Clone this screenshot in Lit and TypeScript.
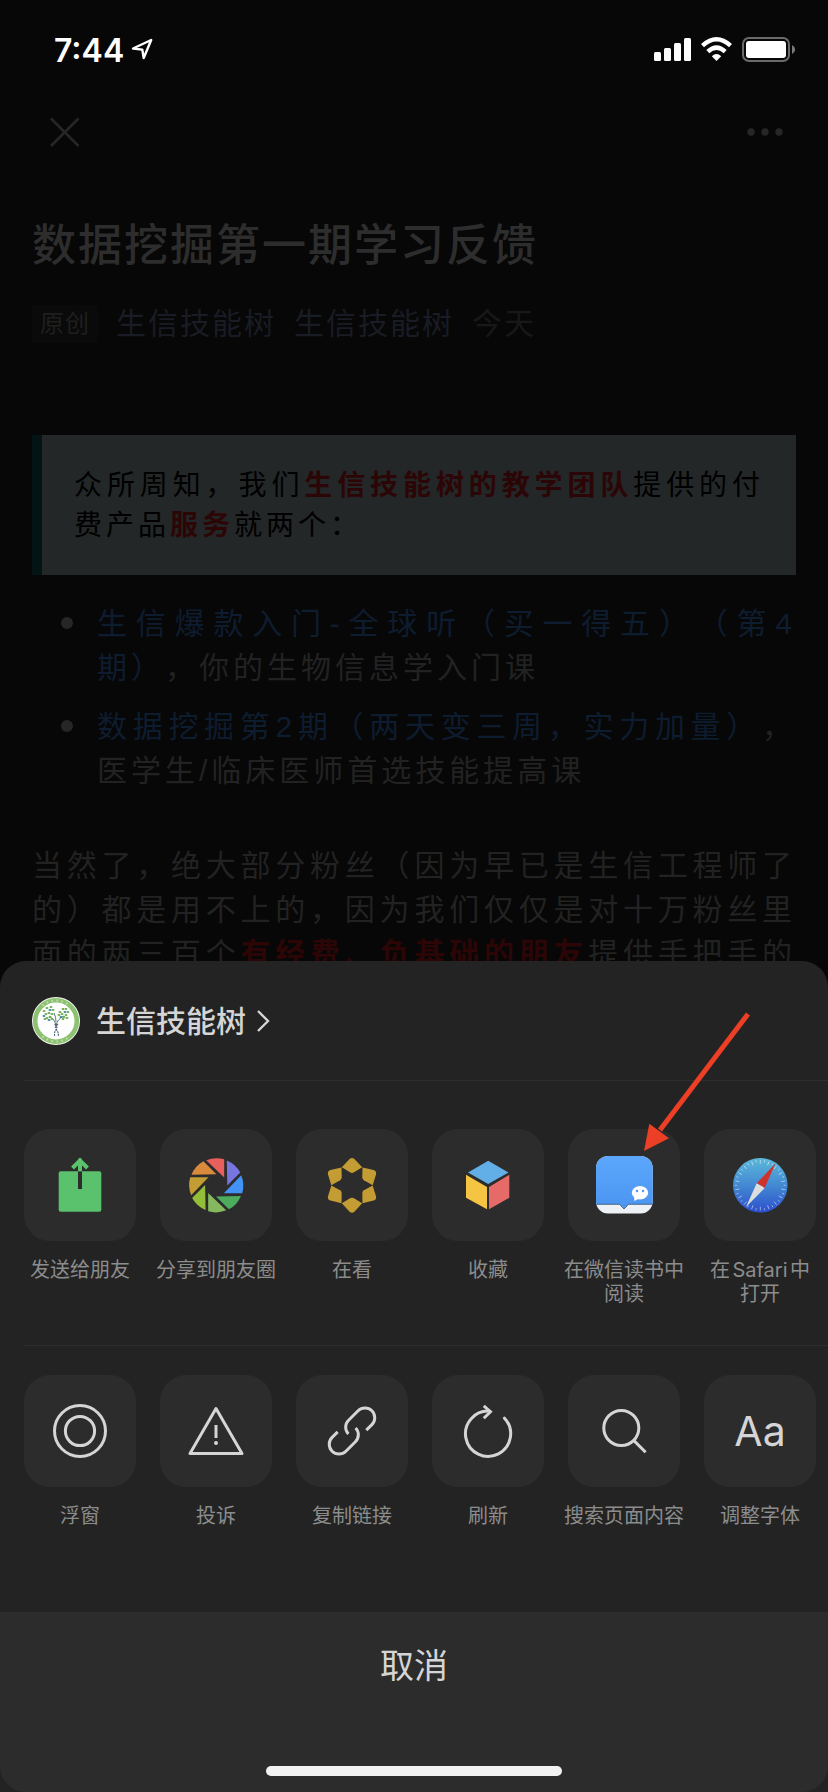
import { LitElement, html, svg, css, TemplateResult } from "lit";
import { customElement, property } from "lit/decorators.js";

interface Action {
  label: string;
  icon: TemplateResult;
}

const tile = (body: unknown) =>
  html`<svg class="glyph" viewBox="0 0 112 112" aria-hidden="true">${body}</svg>`;

const apertureColors = [
  "#e8605c", "#7676de", "#4393f7", "#4dab5e",
  "#86b95f", "#92bf37", "#c49c34", "#d98a3c",
];

const ticks = Array.from({ length: 36 }, (_, i) => i * 10);

const shareActions: Action[] = [
  {
    label: "发送给朋友",
    icon: tile(svg`
      <rect x="34.7" y="42.3" width="42.6" height="40.4" rx="2" fill="#5ac16c"/>
      <rect x="54" y="42.3" width="4" height="17.7" fill="#2c2c2c"/>
      <path d="M48.5 39 56 31.5 63.5 39M56 32V42.3" fill="none" stroke="#5ac16c" stroke-width="4"/>
      <circle cx="56" cy="31" r="2" fill="#5ac16c"/>`),
  },
  {
    label: "分享到朋友圈",
    icon: tile(svg`<g transform="translate(56.2 56.3)">
      ${apertureColors.map((c, i) => svg`<path transform="rotate(${i * 45})" fill=${c} d="M-10 -25A27 27 0 0 1 8 -26V-7.7Z"/>`)}
    </g>`),
  },
  {
    label: "在看",
    icon: tile(svg`<g transform="translate(56 56.3)" fill="#c49c34">
      ${[0, 60, 120, 180, 240, 300].map((a) => svg`<path transform="rotate(${a})" d="M-10.2 -18 -2.4 -26.4Q0 -28.4 2.4 -26.4L10.2 -18 1.6 -12.8Q0 -12 -1.6 -12.8Z"/>`)}
    </g>`),
  },
  {
    label: "收藏",
    icon: tile(svg`
      <path fill="#62aee7" d="M56.2 31.7 76.5 43.4 56.2 55 36 43.4Z"/>
      <path fill="#f6c443" d="M34 45.7 55 58V80.3L34 68.7Z"/>
      <path fill="#e66a67" d="M57 58 77.3 45.7V68.7L57 80.3Z"/>`),
  },
  {
    label: "在微信读书中\n阅读",
    icon: tile(svg`
      <defs>
        <linearGradient id="book" x1="0" y1="0" x2="0" y2="1"><stop offset="0" stop-color="#5ca7fc"/><stop offset="1" stop-color="#4b95f2"/></linearGradient>
        <clipPath id="cover"><rect x="28" y="27" width="56.7" height="57.5" rx="12"/></clipPath>
      </defs>
      <g clip-path="url(#cover)">
        <rect x="28" y="27" width="57" height="58" fill="#eef2f7"/>
        <path d="M28 27H85V75.3H60.5L56 80 51.5 75.3H28Z" fill="url(#book)"/>
        <path d="M28 75.3H51.5L56 80 60.5 75.3H85" fill="none" stroke="#33506f" stroke-width=".8"/>
      </g>
      <ellipse cx="72" cy="63.7" rx="8.2" ry="6.8" fill="#fff"/>
      <path d="M66 67 66.4 72 71 69.5Z" fill="#fff"/>
      <circle cx="69" cy="62" r="1.2" fill="#4b95f2"/><circle cx="75" cy="62" r="1.2" fill="#4b95f2"/>`),
  },
  {
    label: "在Safari中\n打开",
    icon: tile(svg`
      <defs><linearGradient id="sea" x1="0" y1="0" x2="0" y2="1"><stop offset="0" stop-color="#5cb9da"/><stop offset=".5" stop-color="#4389d3"/><stop offset="1" stop-color="#2c4fcc"/></linearGradient></defs>
      <circle cx="56.3" cy="56.3" r="27.3" fill="url(#sea)"/>
      <g stroke="#fff" stroke-width=".8" stroke-opacity=".6">
        ${ticks.map((a) => svg`<path transform="rotate(${a} 56.3 56.3)" d=${a % 20 ? "M56.3 31V33" : "M56.3 31V35"}/>`)}
      </g>
      <path d="M71.5 34.3 52.7 54.3 60.7 59Z" fill="#cf322b"/>
      <path d="M42 78 52.7 54.3 60.7 59Z" fill="#dedede"/>`),
  },
];

const pageActions: Action[] = [
  {
    label: "浮窗",
    icon: tile(svg`<g class="line"><circle cx="56" cy="56" r="25.5"/><circle cx="56" cy="56" r="14.6"/></g>`),
  },
  {
    label: "投诉",
    icon: tile(svg`
      <g class="line"><path stroke-linejoin="round" d="M56 33.5 82 78.6H30Z"/><path d="M56 50V63"/></g>
      <circle cx="56" cy="68" r="2" fill="#d5d5d5"/>`),
  },
  {
    label: "复制链接",
    icon: tile(svg`<g class="line">
      <path d="M52.4 59A9.7 9.7 0 0 1 52.6 45.3L62.1 35.8A9.7 9.7 0 0 1 75.9 49.6L70.3 55.1"/>
      <path transform="rotate(180 56 56)" d="M52.4 59A9.7 9.7 0 0 1 52.6 45.3L62.1 35.8A9.7 9.7 0 0 1 75.9 49.6L70.3 55.1"/>
    </g>`),
  },
  {
    label: "刷新",
    icon: tile(svg`<g class="line">
      <path stroke-linecap="round" d="M72.5 43.2A22.6 22.6 0 1 1 58 36.2"/>
      <path d="M51.8 30.8 58.4 36.7 51.8 43.2"/>
    </g>`),
  },
  {
    label: "搜索页面内容",
    icon: tile(svg`<g class="line"><circle cx="53.3" cy="53" r="17.5"/><path d="M65.7 65.4 77.6 77.3"/></g>`),
  },
  { label: "调整字体", icon: html`<span class="letters">Aa</span>` },
];

@customElement("action-row")
class ActionRow extends LitElement {
  @property({ attribute: false }) actions: Action[] = [];

  static styles = css`
    :host { display: block; }
    .row { display: flex; gap: 24px; margin: 0; padding: 0; list-style: none; }
    .action {
      display: flex; flex-direction: column; align-items: center; gap: 17px;
      width: 112px; padding: 0; border: 0; background: none; color: #8c8c8c;
      font-family: inherit; font-size: 20px; line-height: 24px; cursor: pointer;
    }
    .tile {
      display: grid; place-items: center; width: 112px; height: 112px;
      border-radius: 26px; background: #2c2c2c;
    }
    .glyph { display: block; width: 112px; height: 112px; }
    .line { fill: none; stroke: #d5d5d5; stroke-width: 3; }
    .letters { font-size: 41px; line-height: 48px; font-weight: 400; color: #d5d5d5; }
    .label { white-space: pre; text-align: center; text-autospace: normal; }
  `;

  render() {
    return html`<ul class="row">
      ${this.actions.map((a) => html`<li>
        <button class="action" type="button">
          <span class="tile">${a.icon}</span>
          <span class="label">${a.label}</span>
        </button>
      </li>`)}
    </ul>`;
  }
}

const leaves: [number, number, string][] = [
  [12, 14, "g"], [15, 11, "g"], [18, 13, "b"], [14, 17, "g"], [17, 16, "g"], [12, 19, "b"], [15, 21, "g"],
  [18, 20, "g"], [20, 17, "g"], [19, 10, "g"], [21, 13, "g"], [17, 23, "b"], [20, 22, "g"], [28, 15, "g"],
  [31, 12, "g"], [33, 15, "b"], [30, 17, "g"], [34, 18, "g"], [36, 15, "g"], [32, 20, "g"], [29, 20, "b"],
  [35, 21, "g"], [27, 18, "g"], [31, 22, "g"], [34, 12, "g"], [13, 22, "g"],
];

@customElement("app-root")
class AppRoot extends LitElement {
  static styles = css`
    :host {
      display: block; position: relative; min-height: 100vh; overflow: hidden;
      background: #070707; color: #222;
      font-family: Inter, "Noto Sans CJK SC", sans-serif;
    }
    button { border: 0; padding: 0; background: none; font-family: inherit; color: inherit; cursor: pointer; }
    svg { display: block; }

    .status {
      display: flex; align-items: center; justify-content: space-between;
      height: 98px; padding: 0 33px 0 54px; color: #fff;
    }
    .clock { display: flex; align-items: center; gap: 7px; }
    .time { padding-top: 3px; font-size: 32px; line-height: 40px; font-weight: 600; }
    .nav {
      display: flex; align-items: center; justify-content: space-between;
      height: 68px; padding: 0 43px 0 48px; color: #262626;
    }

    .article {
      padding: 50px 32px 0;
      font-family: "Liberation Sans", "Noto Sans CJK SC", sans-serif;
      text-spacing-trim: space-all; text-autospace: no-autospace;
    }
    .title { margin: 0; font-size: 44px; line-height: 60px; font-weight: 500; letter-spacing: 2px; color: #2d2d2d; }
    .meta { display: flex; align-items: center; gap: 18px; margin-top: 29px; font-size: 30px; line-height: 38px; letter-spacing: 2px; }
    .tag { padding: 0 8px; font-size: 24px; letter-spacing: 1px; background: #0a0a0a; color: #1f1f1f; }
    .author { color: #191c24; text-decoration: none; }
    .date { color: #181818; }

    .lead {
      margin: 92px 0 0; padding: 31px 32px 29px; border-left: 10px solid #041313;
      background: #232728; color: #000; font-size: 28px; line-height: 40px;
      letter-spacing: 4px; text-align: justify;
    }
    .lead p { margin: 0; }
    .hot { font-weight: 700; color: #2c0606; }

    .courses {
      display: grid; gap: 15px; margin: 27px 0 0; padding: 0 0 0 29px; list-style: none;
      font-size: 30px; line-height: 44px; letter-spacing: 4px;
    }
    .course { display: grid; grid-template-columns: 12px 1fr; gap: 24px; text-align: justify; }
    .course::before { content: ""; width: 12px; height: 12px; margin-top: 15px; border-radius: 50%; background: #262626; }
    .course a { color: #0e1c2f; text-decoration: none; }
    .body {
      margin: 51px 0 0; font-size: 30px; line-height: 44px; letter-spacing: 4px;
      text-align: justify; text-align-last: justify;
    }

    .sheet {
      position: absolute; left: 0; right: 0; bottom: 0;
      border-radius: 26px 26px 0 0; background: #232323; color: #d5d5d5;
    }
    .account {
      display: flex; align-items: center; padding: 36px 32px 35px; gap: 16px;
      width: 100%; font-size: 30px; line-height: 48px; font-weight: 500;
    }
    .name { display: flex; align-items: center; gap: 10px; }
    .group { margin-left: 24px; border-top: 1px solid #2e2e2e; }
    .share { padding: 48px 0 39px; }
    .tools { padding: 29px 0 84px; }
    .cancel-bar { display: flex; flex-direction: column; align-items: center; padding-bottom: 16px; border-radius: 0 0 26px 26px; background: #2c2c2c; }
    .cancel { width: 100%; height: 108px; font-size: 34px; line-height: 48px; }
    .home { width: 296px; height: 10px; margin-top: 46px; border-radius: 5px; background: #f2f2f2; }
    .pointer { position: absolute; top: 47px; right: 76px; }
  `;

  render() {
    return html`
      <header>
        <div class="status">
          <div class="clock">
            <span class="time">7:44</span>
            <svg width="22" height="22" viewBox="0 0 22 22" aria-hidden="true">
              <path d="M2 10.5 20.2 2 12.7 20 11.3 11.6Z" fill="none" stroke="#fff" stroke-width="2.4" stroke-linejoin="round"/>
            </svg>
          </div>
          <svg width="141" height="25" viewBox="0 0 141 25" aria-hidden="true">
            <g fill="#fff">
              <rect x="0" y="15" width="7" height="9" rx="1.5"/>
              <rect x="10" y="11" width="7" height="13" rx="1.5"/>
              <rect x="20" y="6" width="7" height="18" rx="1.5"/>
              <rect x="30" y="1" width="7" height="23" rx="1.5"/>
              <path d="M62.5 24 57.8 19.2Q62.5 15 67.2 19.2Z"/>
            </g>
            <g fill="none" stroke="#fff" stroke-width="4.4">
              <path d="M48.5 8.6Q62.5 -4 76.5 8.6"/>
              <path d="M53.8 14.6Q62.5 6.6 71.2 14.6"/>
            </g>
            <rect x="89" y="1" width="46" height="23" rx="6" fill="none" stroke="#6a6a6a" stroke-width="2"/>
            <rect x="92" y="4" width="40" height="17" rx="3" fill="#fff"/>
            <path d="M138 8.3Q141 9.6 141 12.6T138 17Z" fill="#7a7a7a"/>
          </svg>
        </div>
        <nav class="nav">
          <button type="button" aria-label="关闭">
            <svg width="33" height="33" viewBox="0 0 33 33"><path d="M3 2.5 30.5 30M30.5 2.5 3 30" stroke="currentColor" stroke-width="2.6"/></svg>
          </button>
          <button type="button" aria-label="更多">
            <svg width="40" height="12" viewBox="0 0 40 12" fill="currentColor"><circle cx="6" cy="6" r="3.7"/><circle cx="20" cy="6" r="3.7"/><circle cx="34" cy="6" r="3.7"/></svg>
          </button>
        </nav>
      </header>

      <main class="article">
        <h1 class="title">数据挖掘第一期学习反馈</h1>
        <div class="meta">
          <span class="tag">原创</span>
          <a class="author" href="#">生信技能树</a>
          <a class="author" href="#">生信技能树</a>
          <span class="date">今天</span>
        </div>
        <blockquote class="lead">
          <p>众所周知，我们<strong class="hot">生信技能树的教学团队</strong>提供的付费产品<strong class="hot">服务</strong>就两个：</p>
        </blockquote>
        <ul class="courses">
          <li class="course"><span><a href="#">生信爆款入门-全球听（买一得五）（第4期）</a>，你的生物信息学入门课</span></li>
          <li class="course"><span><a href="#">数据挖掘第2期（两天变三周，实力加量）</a>，医学生/临床医师首选技能提高课</span></li>
        </ul>
        <p class="body">当然了，绝大部分粉丝（因为早已是生信工程师了的）都是用不上的，因为我们仅仅是对十万粉丝里面的两三百个<strong class="hot">有经费、负基础的朋友</strong>提供手把手的</p>
      </main>

      <section class="sheet" role="dialog" aria-label="分享">
        <button class="account" type="button">
          <svg width="48" height="48" viewBox="0 0 48 48" aria-hidden="true">
            <circle cx="24" cy="24" r="24" fill="#f4f8f1"/>
            <circle cx="24" cy="24" r="20.8" fill="#fff" stroke="#8cc271" stroke-width="4.6"/>
            <path d="M10.5 8.5A20.8 20.8 0 0 1 37.5 8.5M10.5 39.5A20.8 20.8 0 0 0 37.5 39.5" fill="none" stroke="#c4e0b6" stroke-width="2" stroke-dasharray="1.5 3.5"/>
            <path d="M17 19Q23 22 24 29M32 19Q25 22 24 29M22 16Q24 20 24 25" fill="none" stroke="#5a7f78" stroke-width="1"/>
            <path d="M22.6 27Q26.5 30 24 33T23 39.5M26 27Q22 30 24.6 33T26 39.5" fill="none" stroke="#4a5c78" stroke-width="1.1" stroke-dasharray="2 .8"/>
            ${leaves.map(([x, y, c]) => svg`<ellipse cx=${x} cy=${y} rx="1.5" ry="1.1" fill=${c === "g" ? "#6aab4a" : "#3c86a0"}/>`)}
          </svg>
          <span class="name">生信技能树
            <svg width="14" height="24" viewBox="0 0 14 24" aria-hidden="true"><path d="M2 2 12 12 2 22" fill="none" stroke="#d5d5d5" stroke-width="2.4"/></svg>
          </span>
        </button>
        <div class="group share"><action-row .actions=${shareActions}></action-row></div>
        <div class="group tools"><action-row .actions=${pageActions}></action-row></div>
        <div class="cancel-bar">
          <button class="cancel" type="button">取消</button>
          <div class="home"></div>
        </div>
        <svg class="pointer" width="112" height="146" viewBox="0 0 112 146" aria-hidden="true">
          <path d="M108 6 20 122" stroke="#ec3f25" stroke-width="5"/>
          <path d="M4 143 9.3 115.7 29 130.3Z" fill="#ec3f25"/>
        </svg>
      </section>
    `;
  }
}
